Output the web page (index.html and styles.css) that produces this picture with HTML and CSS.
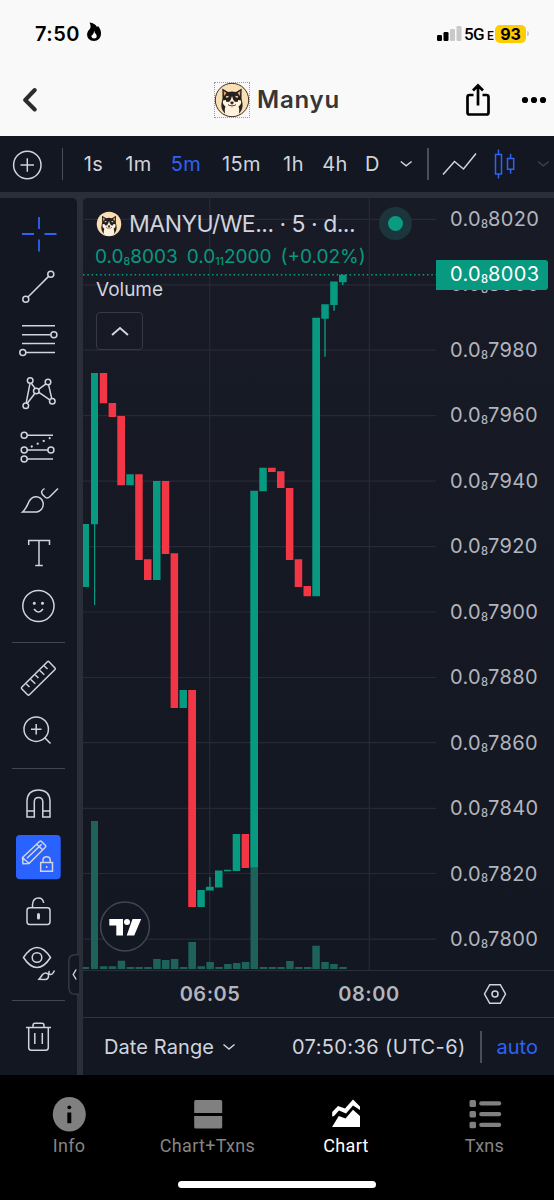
FILE: index.html
```html
<!DOCTYPE html>
<html lang="en">
<head>
<meta charset="utf-8">
<title>Manyu</title>
<link rel="stylesheet" href="styles.css">
</head>
<body>
<svg class="defs" width="0" height="0" aria-hidden="true">
  <symbol id="dog" viewBox="0 0 36 36">
    <circle cx="18" cy="18" r="17" fill="#fbdfb4"/>
    <path d="M9 29C6 24 8 20 8.500 16L8.300 6.500 14 10Q18 9 22 10L27.700 6.500 27.500 16C28 20 30 24 27 29L24 33H12z" fill="#25221f"/>
    <path d="M9.700 9l2.800 2-2.500 3zM26.300 9l-2.800 2 2.500 3z" fill="#dda984"/>
    <path d="M9 18.500Q11 17.500 14 18.500L16.500 18.500 18 14 19.500 18.500 22 18.500Q25 17.500 27 18.500Q28 22 24.500 24.500Q26 28 24.500 33Q18 36 11.500 33Q10 28 11.500 24.500Q8 22 9 18.500z" fill="#fff2de"/>
    <path d="M12 15l2.500-.5M24 15l-2.500-.5" stroke="#efd3a5" stroke-width="1.400"/>
    <path d="M11.500 17l4.500.7-.5 2-3 .3zM24.500 17l-4.500.7.5 2 3 .3z" fill="#25221f"/>
    <ellipse cx="18" cy="20.800" rx="1.700" ry="1.200" fill="#25221f"/>
    <path d="M14 22.500Q16 24.800 18 23Q20 24.800 22 22.500" fill="none" stroke="#39302a" stroke-width=".9"/>
    <path d="M17 24h2q-.2 1.600-1 1.600t-1-1.600z" fill="#e98f79"/>
  </symbol>
</svg>

<header class="top">
  <div class="status">
    <div class="clock">7:50</div>
    <svg class="flame" width="16" height="20" viewBox="0 0 16 20"><path d="M3.500.5Q9 1 11 5L12 4Q15.500 8 15 12.500Q14 19 8 19Q1 18.500 1 12Q1.200 9 3.800 7Q5.500 4.500 3.500.5z"/><path d="M8.200 8.500Q8.500 11 10 12Q12 16 8.500 16.500Q5 16.500 5.500 13.500Q7.800 12.500 8.200 8.500z" fill="#f9f9f9"/></svg>
    <svg class="signal" width="27" height="18" viewBox="0 0 27 18"><rect x="1" y="11" width="5" height="6" rx="1.300"/><rect x="7.500" y="8" width="5" height="9" rx="1.300"/><rect x="14" y="5" width="5" height="12" rx="1.300" fill="#c9c9c9"/><rect x="20.500" y="2" width="5" height="15" rx="1.300" fill="#c9c9c9"/></svg>
    <div class="network">5G<span>E</span></div>
    <div class="battery">93</div><i class="battery-tip"></i>
  </div>
  <div class="titlebar">
    <svg class="back" width="18" height="28" viewBox="0 0 18 28"><path d="M15.700 4L6.200 14l9.500 9.500" fill="none" stroke="#2c2c2c" stroke-width="4" stroke-linecap="round" stroke-linejoin="round"/></svg>
    <div class="avatar"><svg width="36" height="36"><use href="#dog"/><circle cx="18" cy="18" r="16.700" fill="none" stroke="#35302b" stroke-width="1"/></svg></div>
    <h1>Manyu</h1>
    <svg class="share" width="28" height="36" viewBox="0 0 28 36" fill="none" stroke="#000" stroke-width="2.700"><path d="M9.500 13H5.500Q3.500 13 3.500 15V30.500Q3.500 32.500 5.500 32.500H22.500Q24.500 32.500 24.500 30.500V15Q24.500 13 22.500 13H18.500"/><path d="M14 23.500V4M9 8.500L14 3.500l5 5"/></svg>
    <svg class="more" width="26" height="8" viewBox="0 0 26 8"><circle cx="4" cy="4" r="3.100"/><circle cx="13" cy="4" r="3.100"/><circle cx="22" cy="4" r="3.100"/></svg>
  </div>
</header>

<nav class="toolbar">
  <svg class="line-icon" width="55" height="56" viewBox="0 136 55 56"><circle cx="27.300" cy="165" r="13.700"/><path d="M20.500 165h13.500M27.300 158.200v13.500"/></svg>
  <i class="divider"></i>
  <span>1s</span><span>1m</span><span class="active">5m</span><span>15m</span><span>1h</span><span>4h</span><span>D</span>
  <svg class="line-icon" width="30" height="56" viewBox="391 136 30 56"><path d="M400.800 161.500l5.300 4.300 5.500-4.300"/></svg>
  <i class="divider"></i>
  <svg class="line-icon" width="49" height="56" viewBox="435 136 49 56"><path d="M443 174.500L454.500 161.500 463.500 169 476 153.500"/></svg>
  <svg class="line-icon blue" width="41" height="56" viewBox="484 136 41 56"><path d="M495.500 154.500h6v19.500h-6zM498.500 149.500v5M498.500 174v4.500M507.500 158.500h6.200v10.700h-6.200zM510.600 153.700v4.800M510.600 169.200v4.500"/></svg>
  <svg class="line-icon faint" width="29" height="56" viewBox="525 136 29 56"><path d="M538 161.500l5.300 4.300 5.500-4.300"/></svg>
</nav>

<main class="workspace">
  <aside class="tools">
    <svg class="line-icon blue thick" width="77" height="53" viewBox="0 208 77 53"><path d="M22 234h12M44.500 234h12M39 217v12M39 239.500v12"/></svg>
    <svg class="line-icon" width="77" height="53" viewBox="0 261 77 53"><circle cx="25.800" cy="299.200" r="3"/><circle cx="50.800" cy="274.200" r="3"/><path d="M28 297l20.600-20.600"/></svg>
    <svg class="line-icon" width="77" height="53" viewBox="0 314 77 53"><path d="M22 325.700h33M22 334.700h28.800M22 343.600h33M26 352.600h29"/><circle cx="53.900" cy="334.700" r="3"/><circle cx="22.800" cy="352.600" r="3"/></svg>
    <svg class="line-icon" width="77" height="53" viewBox="0 367 77 53"><circle cx="30.200" cy="380.500" r="2.800"/><circle cx="48" cy="382" r="2.800"/><circle cx="36.300" cy="391" r="2.800"/><circle cx="25.800" cy="405.700" r="2.800"/><circle cx="52.300" cy="401.200" r="2.800"/><path d="M30 383.300L26.200 402.900M31.300 383.200L35.100 388.400M46 383.800L38.500 389.300M48.600 384.800L51.700 398.400M34.800 393.500L27.300 403.300M38.900 392.300L49.800 399.800"/></svg>
    <svg class="line-icon" width="77" height="53" viewBox="0 420 77 53"><circle cx="24.200" cy="435.300" r="3"/><circle cx="24.200" cy="450" r="3"/><circle cx="50.900" cy="450" r="3"/><circle cx="24.200" cy="458.900" r="3"/><path d="M27.200 435.300H53M27.200 450h20.700M27.200 458.900H53"/><path d="M31.700 446.500L50 438" stroke-dasharray=".1 6.500" stroke-width="2.200" stroke-linecap="round"/></svg>
    <svg class="line-icon" width="77" height="53" viewBox="0 473 77 53"><path d="M22.500 512C26 509 27 506 29 501.500Q32 496.500 36.500 496.800Q42 497.500 43.200 503Q43.700 510 37 512zM44.500 488.500Q40 491.500 42.500 494.500L45.500 497.500Q47.500 499 50 496.500L58 488.500"/></svg>
    <svg class="line-icon" width="77" height="53" viewBox="0 526 77 53"><path d="M28.700 545V540.500H49.500V545M39 540.500V565.500M35.300 565.500h7.500"/></svg>
    <svg class="line-icon" width="77" height="53" viewBox="0 579 77 53"><circle cx="38.400" cy="606" r="15.600"/><path d="M34 609Q38.500 615 43 609"/><circle cx="34.300" cy="603.300" r=".8" class="solid"/><circle cx="42.500" cy="603.300" r=".8" class="solid"/></svg>
    <i class="rule"></i>
    <svg class="line-icon" width="77" height="53" viewBox="0 652 77 53"><path d="M21.700 687.200Q21 688 21.700 688.700L27.600 694.700Q28.500 695.500 29.400 694.700L55 669.500Q55.700 668.700 55 668L49 661.800Q48.200 661 47.400 661.800zM26.300 684l3.200 3M30.800 679.500l4.500 4.300M35.300 675l3.200 3M39.800 670.500l4.500 4.300M44.300 666l3.200 3"/></svg>
    <svg class="line-icon" width="77" height="53" viewBox="0 705 77 53"><circle cx="36.200" cy="729.200" r="12.200"/><path d="M36.200 724v10.500M31 729.200h10.500M44.500 737.500l6 6"/></svg>
    <i class="rule"></i>
    <svg class="line-icon" width="77" height="53" viewBox="0 778 77 53"><path d="M27 817V801Q27.500 790 38.500 790T50 801V817H42.800V801.500Q42.500 797.500 38.500 797.500T34.300 801.500V817zM27 811h7.300M42.800 811H50"/></svg>
    <svg class="line-icon" width="77" height="53" viewBox="0 831 77 53"><rect x="16" y="835" width="44.700" height="44.200" rx="4" class="chip"/><path d="M23 863.700L22.500 857.500 39.500 841.500Q40.500 840.500 41.500 841.500L45.500 845.500Q46.200 846.500 45.300 847.300L29 863.500zM22.500 857.500L29 863.500M27 858.300L41.700 844.300M36.700 844.300l6.500 6"/><path d="M40.700 862.500h11.800v8.700H40.700zM43 862.500v-3q.5-2.700 3.600-2.700t3.600 2.700v3M46.600 866v2"/></svg>
    <svg class="line-icon" width="77" height="53" viewBox="0 884 77 53"><rect x="27" y="907.800" width="23" height="16.700" rx="2.700"/><path d="M32.500 907.500V904.500Q33 898 38.500 898Q43 898 43.700 903"/><path d="M38.500 914.500v3.500" stroke-width="3" stroke-linecap="round"/></svg>
    <svg class="line-icon" width="77" height="53" viewBox="0 937 77 53"><path d="M23.500 957.500Q30 947.500 37 947.500T50.500 957.500Q44 967.500 37 967.500T23.500 957.500z"/><circle cx="37" cy="957.500" r="4.800"/><path d="M39 979.300Q41 977 42.500 974.500Q46 971.500 48.500 974.500Q49 979 45.500 979.500zM49.500 971Q48 973 50 974.300T54.500 970.500"/></svg>
    <i class="rule"></i>
    <svg class="line-icon" width="77" height="53" viewBox="0 1010 77 53"><path d="M26 1027.500h25M28.700 1027.500V1047.500Q28.700 1050.300 31.500 1050.300H45.500Q48.300 1050.300 48.300 1047.500V1027.500M33 1027.500V1025.500Q33 1023.300 35 1023.300H42Q44 1023.300 44 1025.500V1027.500M34.800 1033v11M42.300 1033v11"/></svg>
    <svg class="handle" width="11" height="41" viewBox="0 0 11 41"><path d="M11 .8H7Q.8 1 .8 7V34Q1 40.200 7 40.200H11" fill="#131722" stroke="#343843" stroke-width="1.500"/><path d="M8.200 15.500L5.200 20.500l3 5" fill="none" stroke="#d1d4dc" stroke-width="1.400"/></svg>
  </aside>

  <section class="chart">
    <div class="pane">
      <svg class="plot" width="353" height="772" viewBox="83 198 353 772">
        <path class="grid" d="M83 219.300h353M83 284.800h353M83 350.200h353M83 415.700h353M83 481.200h353M83 546.600h353M83 612h353M83 677.500h353M83 742.700h353M83 808.300h353M83 873.500h353M83 939.200h353M209.700 198V970M369.300 198V970"/>
        <path class="volume" d="M83 967h6v2h-6zM91 821h7v148h-7zM99.900 966.300h7.500v2.700h-7.500zM108.800 966.300h7.500v2.700h-7.500zM117.700 960.700h7.500v8.300h-7.500zM126.600 967h7.500v2h-7.500zM135.400 967h7.500v2h-7.500zM144.300 967h7.500v2h-7.500zM153.200 959h7.500v10h-7.500zM162 960h7.500v9h-7.500zM170.900 959h7.500v10h-7.500zM179.800 967h7.500v2h-7.500zM188.300 942h7.700v27h-7.700zM197.500 966.300h7.500v2.700h-7.500zM206.400 962h7.500v7h-7.500zM215.300 967h7.500v2h-7.500zM224.100 964h7.500v5h-7.500zM233 963h7.500v6h-7.500zM241.900 962h7.500v7h-7.500zM250.500 868h7.500v101h-7.500zM259.600 967h7.500v2h-7.500zM268.500 967h7.500v2h-7.500zM277.300 967h7.500v2h-7.500zM286.200 961h7.500v8h-7.500zM295.100 967h7.500v2h-7.500zM304 967h7.500v2h-7.500zM312.300 945.700h7.500v23.300h-7.500zM321.300 962h7.500v7h-7.500zM330.200 964h7.500v5h-7.500zM339.200 967h7.500v2h-7.500z"/>
        <path class="up" d="M83 524h6v63h-6zM91 373h7v151.300h-7zM126.300 474.300h7.500v11h-7.500zM153 481h7.500v99h-7.500zM179.500 690h7.500v18h-7.500zM197.300 890h7.500v17h-7.500zM206 886.700h7.700v3.800h-7.700zM215 870.500h7.500v17h-7.500zM224 869.700h7.200v1.500h-7.200zM232.700 834h7.500v37h-7.500zM250.300 490.700h7.700v377h-7.700zM259.300 467.700h7.500v23.600h-7.500zM312.300 317.700h7.700v278.600h-7.700zM321.300 304.300h7.500v14.500h-7.500zM330.200 281.500h7.500v23.500h-7.500zM339 274.700h7.700v7.600h-7.700zM94 524h1.200v81h-1.200zM209.300 877h1.200v10h-1.200zM324.300 318h1.400v38.700h-1.400zM333.300 305h1.500v5.700h-1.500zM342 282h1.500v3h-1.500z"/>
        <path class="down" d="M99.800 373h7.400v30.300h-7.400zM108.600 403h7.500v14h-7.500zM117.300 416h7.700v69.300h-7.700zM135.200 474.300h7.500v85.700h-7.500zM144 559.300h7.500v20.700h-7.500zM161.800 481h7.500v73h-7.500zM170.600 553.300h7.500v154.700h-7.500zM188.200 690h7.800v217h-7.800zM241.600 834h7.500v34h-7.500zM268 467.700h7.700v4.300h-7.700zM277 471.300h7.500v16.700h-7.500zM285.900 488h7.500v72h-7.500zM294.700 559.300h7.500v27.700h-7.500zM303.500 586h7.500v10.300h-7.500z"/>
        <path d="M83 274.800h353" stroke="#0a9b81" stroke-width="1.500" stroke-dasharray="1.500 2.800"/>
        <circle cx="125" cy="926.500" r="24.400" fill="#131722" stroke="#42454f" stroke-width="1.500"/>
        <path d="M109.300 919H123V935.500h-6.700V925.500h-7zM132.500 919H141.200L134.200 935.500H126.700z" fill="#fff"/><circle cx="127" cy="922" r="3" fill="#fff"/>
      </svg>
      <div class="legend">
        <div class="symbol"><svg width="26" height="26"><use href="#dog"/></svg><span>MANYU/WE... · 5 · d...</span><i class="live"></i></div>
        <div class="change"><span>0.0<sub>8</sub>8003</span><span>0.0<sub>11</sub>2000</span><span>(+0.02%)</span></div>
        <div class="study">Volume</div>
        <div class="collapse"><svg width="20" height="12" viewBox="0 0 20 12"><path d="M2 10L10 3l8 7" fill="none" stroke="#d1d4dc" stroke-width="2"/></svg></div>
      </div>
      <div class="prices">
        <span>0.0<sub>8</sub>8020</span><span>0.0<sub>8</sub>8000</span><span>0.0<sub>8</sub>7980</span><span>0.0<sub>8</sub>7960</span><span>0.0<sub>8</sub>7940</span><span>0.0<sub>8</sub>7920</span><span>0.0<sub>8</sub>7900</span><span>0.0<sub>8</sub>7880</span><span>0.0<sub>8</sub>7860</span><span>0.0<sub>8</sub>7840</span><span>0.0<sub>8</sub>7820</span><span>0.0<sub>8</sub>7800</span>
        <div class="last">0.0<sub>8</sub>8003</div>
      </div>
    </div>
    <div class="times"><b>06:05</b><b>08:00</b><svg class="line-icon" width="24" height="22" viewBox="0 0 24 22"><path d="M6.700 1.700H17.300L22.500 11 17.300 20.300H6.700L1.500 11z"/><circle cx="12" cy="11" r="3"/></svg></div>
    <div class="range"><span class="date">Date Range</span><svg class="line-icon" width="14" height="8" viewBox="0 0 14 8"><path d="M1.500 1.500L7 6l5.500-4.500"/></svg><span class="utc">07:50:36 (UTC-6)</span><i class="divider"></i><span class="auto">auto</span></div>
  </section>
</main>

<footer class="tabs">
  <a><svg width="40" height="40" viewBox="49 1094 40 40"><ellipse cx="69.300" cy="1114.300" rx="16.500" ry="17.300"/><circle cx="69.300" cy="1107.300" r="1.900" fill="#000"/><path d="M67.300 1112.500h4v10.700h-4z" fill="#000"/></svg><span>Info</span></a>
  <a><svg width="40" height="40" viewBox="188.300 1094 40 40"><path d="M196 1100h25q1.500 0 1.500 1.500V1113H194.500V1101.500q0-1.500 1.500-1.500zM194.500 1116H222.500V1127q0 1.500-1.500 1.500H196q-1.500 0-1.500-1.500z"/></svg><span>Chart+Txns</span></a>
  <a class="on"><svg width="40" height="40" viewBox="327 1094 40 40"><path d="M333 1127L339.800 1116 346.500 1118.500 354 1109.800 361 1116V1127z"/><path d="M333.200 1112V1116.500L335 1116 340 1110.500 347 1113.500 354 1105.500 361 1110V1106.500L354 1099.500 346 1108.500 339 1106z"/></svg><span>Chart</span></a>
  <a><svg width="40" height="40" viewBox="464.500 1094 40 40"><rect x="469" y="1100" width="6.500" height="7" rx="1.500"/><rect x="469" y="1111" width="6.500" height="6.500" rx="1.500"/><rect x="469" y="1121.700" width="6.500" height="6.500" rx="1.500"/><rect x="478.700" y="1101.300" width="22" height="4.300" rx="2"/><rect x="478.700" y="1112" width="22" height="4.300" rx="2"/><rect x="478.700" y="1122.700" width="22" height="4.300" rx="2"/></svg><span>Txns</span></a>
  <i class="home"></i>
</footer>
</body>
</html>
```

FILE: styles.css
```css
* { box-sizing: border-box; }
body { margin: 0; width: 554px; height: 1200px; overflow: hidden; background: #000; color: #d1d4dc; font-family: Inter, "Liberation Sans", sans-serif; font-size: 20px; }
svg { display: block; flex: none; }
.defs { position: absolute; }

.top { height: 136px; background: #f9f9f9; color: #000; }
.status { height: 64px; display: flex; align-items: center; padding: 3px 0 0 35px; }
.clock { width: 50px; font-size: 20px; font-weight: 600; letter-spacing: .5px; }
.flame { margin: -3px 0 0 1px; }
.signal { margin-left: 334px; margin-top: -2px; }
.network { width: 29px; font: 500 17px Roboto, sans-serif; letter-spacing: -.6px; white-space: nowrap; margin-left: 1px; }
.network span { font-size: 12px; margin-left: 3px; }
.battery { width: 31px; height: 18px; border-radius: 5px; background: #fc0; font-size: 16px; font-weight: 700; line-height: 18px; text-align: center; margin-left: 2px; }
.battery-tip { width: 2px; height: 5px; margin-left: 1px; border-radius: 0 2px 2px 0; background: #ccc; }
.titlebar { height: 72px; display: flex; align-items: center; padding-left: 19px; }
.avatar { width: 36px; height: 36px; margin-left: 177px; outline: 1px dotted #9a9a9a; outline-offset: -1px; }
h1 { margin: 0 0 0 7px; width: 206px; font-size: 24px; font-weight: 600; line-height: 30px; letter-spacing: .8px; color: #363636; }
.share { margin-left: 1px; }
.more { margin-left: 29px; }

.toolbar { height: 56px; background: #131722; display: grid; grid-template-columns: 55px 15px 47px 43px 52px 59px 45px 38px 37px 30px 14px 49px 41px 29px; align-items: center; text-align: center; letter-spacing: .4px; }
.divider { width: 1.500px; height: 32px; background: #4a4e59; justify-self: center; }
.active { color: #2f62f5; }
.line-icon { fill: none; stroke: #d1d4dc; stroke-width: 1.500; }
.line-icon.blue { stroke: #2f62f5; }
.line-icon.faint { stroke: #3c404b; }
.line-icon.thick { stroke-width: 1.800; }
.line-icon .solid { fill: #d1d4dc; }
.line-icon .chip { fill: #2962ff; stroke: none; }

.workspace { height: 883px; padding-top: 6px; background: #2a2e39; display: grid; grid-template-columns: 77px 471px; column-gap: 6px; }
.tools { position: relative; background: #131722; border-radius: 0 5px 0 0; padding-top: 10px; height: 877px; }
.rule { display: block; width: 53px; height: 1.500px; margin: 9.500px 0 9px 12px; background: #434651; }
.handle { position: absolute; right: -2px; top: 756px; }

.chart { background: #131722; border-radius: 5px 0 0 0; overflow: hidden; height: 877px; }
.pane { height: 772px; display: grid; grid-template-columns: 353px 118px; background: linear-gradient(#181b26, #131722); }
.plot, .legend { grid-area: 1 / 1; }
.grid { fill: none; stroke: #272a36; stroke-width: 1.200; }
.volume { fill: #1e635b; }
.up { fill: #089981; }
.down { fill: #f23645; }
.legend { z-index: 1; padding: 10px 0 0 13px; white-space: nowrap; }
.symbol { display: flex; align-items: center; height: 31px; font-size: 23px; letter-spacing: -.5px; }
.symbol span { width: 238px; margin-left: 7px; }
.live { width: 33px; height: 33px; border-radius: 50%; border: 9px solid #1c343b; background: #0a9b81; margin-left: 12px; flex: none; }
.change { display: flex; gap: 9px; height: 32px; line-height: 36px; color: #089981; font-size: 19px; margin-left: -1px; }
.study { height: 34px; line-height: 37px; font-size: 19px; }
.collapse { width: 47px; height: 38px; margin-top: 7px; border: 1.500px solid #363a45; border-radius: 4px; display: grid; place-items: center; }
sub { font-size: .56em; font-weight: 500; vertical-align: baseline; position: relative; top: .17em; line-height: 0; letter-spacing: 0; }
.prices { position: relative; display: flex; flex-direction: column; justify-content: space-between; padding: 9px 0 19px 14px; line-height: 24px; letter-spacing: .35px; color: #b2b5be; }
.last { position: absolute; left: 0; top: 62px; width: 112px; height: 30px; padding-left: 14px; line-height: 29px; background: #089981; color: #fff; border-radius: 0 3px 3px 0; }
.times { height: 48px; border-top: 1px solid #2a2e39; border-bottom: 1px solid #30343f; display: flex; align-items: center; color: #b2b5be; letter-spacing: .5px; padding-left: 77px; }
.times b { width: 100px; text-align: center; font-weight: 600; }
.times b + b { margin-left: 59px; }
.times svg { margin-left: 64px; }
.range { height: 57px; display: flex; align-items: center; white-space: nowrap; padding-left: 21px; }
.date { width: 112px; letter-spacing: .1px; }
.range svg { margin-left: 6px; }
.utc { width: 173px; margin-left: 56px; letter-spacing: .38px; }
.range .divider { margin-left: 15px; }
.auto { color: #2f62f5; margin-left: 15px; }

.tabs { position: relative; height: 125px; background: #000; display: grid; grid-template-columns: 138px 139px 138px 139px; padding-top: 19px; }
.tabs a { display: flex; flex-direction: column; align-items: center; color: #858585; fill: #808080; font: 18px/24px Roboto, sans-serif; letter-spacing: .3px; }
.tabs .on { color: #fff; fill: #fff; }
.home { position: absolute; left: 178px; top: 106px; width: 198px; height: 7px; border-radius: 4px; background: #fff; }
```
